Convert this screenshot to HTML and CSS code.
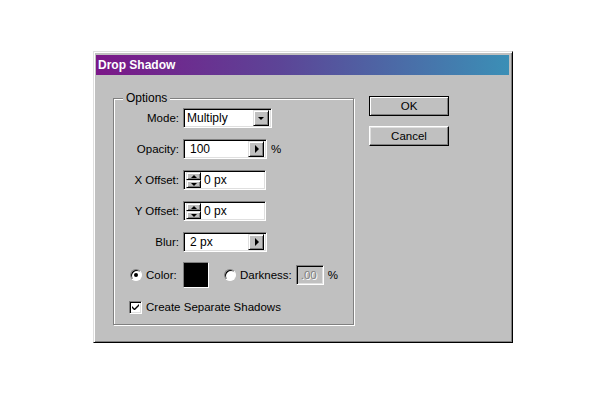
FILE: index.html
```html
<!DOCTYPE html>
<html lang="en">
<head>
	<meta charset="UTF-8">
	<title>Drop Shadow</title>
	<link rel="stylesheet" href="styles.css">
</head>
<body>
	<div class="dialog">
		<div class="titlebar">Drop Shadow</div>
		<div class="content">
			<div class="group">
				<span class="legend">Options</span>
				<div class="rows">
					<label>Mode:</label>
					<div class="field select">
						<span class="val">Multiply</span>
						<span class="btn"><i class="tri-down"></i></span>
					</div>

					<label>Opacity:</label>
					<div class="line">
						<div class="field popup">
							<span class="val">100</span>
							<span class="btn"><i class="tri-right"></i></span>
						</div>
						<span class="unit">%</span>
					</div>

					<label>X Offset:</label>
					<div class="field spinbox">
						<span class="spin"><span class="btn"><i class="tri-up"></i></span><span class="btn"><i class="tri-down"></i></span></span>
						<span class="val">0 px</span>
					</div>

					<label>Y Offset:</label>
					<div class="field spinbox">
						<span class="spin"><span class="btn"><i class="tri-up"></i></span><span class="btn"><i class="tri-down"></i></span></span>
						<span class="val">0 px</span>
					</div>

					<label>Blur:</label>
					<div class="field popup">
						<span class="val">2 px</span>
						<span class="btn"><i class="tri-right"></i></span>
					</div>
				</div>

				<div class="color-row">
					<span class="radio checked"></span>
					<span class="color-label">Color:</span>
					<span class="swatch"></span>
					<span class="radio second"></span>
					<span class="dark-label">Darkness:</span>
					<span class="field disabled">.00</span>
					<span class="unit">%</span>
				</div>

				<div class="check-row">
					<span class="checkbox">
						<svg width="9" height="9" viewBox="0 0 9 9"><path d="M1 3v2l2 2h1l4-4V1L3.5 5.5z" fill="#000"/></svg>
					</span>
					<span>Create Separate Shadows</span>
				</div>
			</div>

			<div class="buttons">
				<div class="button default">OK</div>
				<div class="button">Cancel</div>
			</div>
		</div>
	</div>
</body>
</html>
```

FILE: styles.css
```css
body{
	margin: 51px 0 0 93px;
	background: #fff;
	font: 11.5px/14px 'Liberation Sans', Arial, sans-serif;
	color: #000;
}
.dialog{
	width: 420px;
	height: 292px;
	box-sizing: border-box;
	background: #c0c0c0;
	border: 1px solid;
	border-color: #dfdfdf #000 #000 #dfdfdf;
	box-shadow: inset 1px 1px #fff, inset -1px -1px #808080;
	padding: 3px 3px 2px 2px;
}
.titlebar{
	height: 20px;
	line-height: 20px;
	padding-left: 2px;
	font-weight: bold;
	font-size: 12px;
	color: #fff;
	background: linear-gradient(to right, #7b1788, #5c4597 45%, #3b8fb6);
}
.content{
	display: flex;
	align-items: flex-start;
	padding: 21px 0 0 17px;
}
.group{
	width: 241px;
	box-sizing: border-box;
	margin-top: 2px;
	border: 1px solid #808080;
	box-shadow: 1px 1px #fff, inset 1px 1px #fff;
	padding-bottom: 10px;
	display: flex;
	flex-direction: column;
}
.legend{
	align-self: flex-start;
	margin: -8px 0 0 9px;
	padding: 0 3px;
	background: #c0c0c0;
	line-height: 14px;
	font-size: 12px;
}
.rows{
	display: grid;
	grid-template-columns: 65px auto;
	column-gap: 4px;
	row-gap: 11px;
	margin-top: 3px;
	align-items: center;
	justify-items: start;
}
.rows label{
	justify-self: end;
}
.line{
	display: flex;
	align-items: center;
}
.unit{
	margin-left: 4px;
}

/* sunken fields */
.field{
	display: flex;
	align-items: center;
	height: 20px;
	box-sizing: border-box;
	background: #fff;
	border: 1px solid;
	border-color: #808080 #fff #fff #808080;
	box-shadow: inset 1px 1px #000, inset -1px -1px #dfdfdf;
	padding: 2px;
	font-size: 12px;
}
.field .val{
	flex: 1;
	padding-left: 1px;
}
.select{
	width: 89px;
}
.popup{
	width: 84px;
}
.popup .val{
	padding-left: 4px;
}
.spinbox{
	width: 83px;
}
.spinbox .val{
	padding-left: 3px;
}
.btn{
	display: flex;
	align-items: center;
	justify-content: center;
	width: 16px;
	height: 16px;
	box-sizing: border-box;
	background: #c0c0c0;
	border: 1px solid;
	border-color: #dfdfdf #000 #000 #dfdfdf;
	box-shadow: inset 1px 1px #fff, inset -1px -1px #808080;
}
.spin{
	display: flex;
	flex-direction: column;
}
.spin .btn{
	width: 15px;
	height: 8px;
}
.tri-down,
.tri-up,
.tri-right{
	display: block;
	width: 0;
	height: 0;
}
.tri-down{
	border-top: 3px solid #000;
	border-left: 3px solid transparent;
	border-right: 3px solid transparent;
}
.tri-up{
	border-bottom: 3px solid #000;
	border-left: 3px solid transparent;
	border-right: 3px solid transparent;
}
.tri-right{
	border-left: 4px solid #000;
	border-top: 4px solid transparent;
	border-bottom: 4px solid transparent;
	margin-left: 1px;
}

/* color row */
.color-row{
	display: flex;
	align-items: center;
	margin: 10px 0 0 16px;
	height: 26px;
}
.radio{
	width: 12px;
	height: 12px;
	box-sizing: border-box;
	border-radius: 50%;
	background: #fff;
	border: 1px solid;
	border-color: #808080 #fff #fff #808080;
	box-shadow: inset 1px 1px #000;
	margin-right: 4px;
	display: flex;
	align-items: center;
	justify-content: center;
}
.radio.checked::after{
	content: "";
	width: 4px;
	height: 4px;
	border-radius: 50%;
	background: #000;
}
.radio.second{
	margin-left: 15px;
}
.color-label{
	width: 33px;
	margin-right: 4px;
}
.swatch{
	width: 26px;
	height: 26px;
	box-sizing: border-box;
	background: #000;
	border: 1px solid;
	border-color: #808080 #fff #fff #808080;
}
.dark-label{
	margin-right: 4px;
}
.field.disabled{
	width: 28px;
	background: #c0c0c0;
	color: #808080;
	text-shadow: 1px 1px #fff;
	padding-left: 4px;
	font-size: 11.5px;
}

/* checkbox row */
.check-row{
	display: flex;
	align-items: center;
	margin: 12px 0 0 15px;
}
.checkbox{
	width: 13px;
	height: 13px;
	box-sizing: border-box;
	background: #fff;
	border: 1px solid;
	border-color: #808080 #fff #fff #808080;
	box-shadow: inset 1px 1px #000, inset -1px -1px #dfdfdf;
	margin-right: 4px;
	display: flex;
	align-items: center;
	justify-content: center;
}
.checkbox svg{
	display: block;
}

/* buttons */
.buttons{
	display: flex;
	flex-direction: column;
	gap: 10px;
	margin-left: 15px;
}
.button{
	width: 80px;
	height: 20px;
	box-sizing: border-box;
	text-align: center;
	line-height: 18px;
	border: 1px solid;
	border-color: #fff #000 #000 #fff;
	box-shadow: inset -1px -1px #808080, inset 1px 1px #dfdfdf;
}
.button.default{
	border-color: #000;
	box-shadow: inset 1px 1px #fff, inset -1px -1px #808080;
}
```
